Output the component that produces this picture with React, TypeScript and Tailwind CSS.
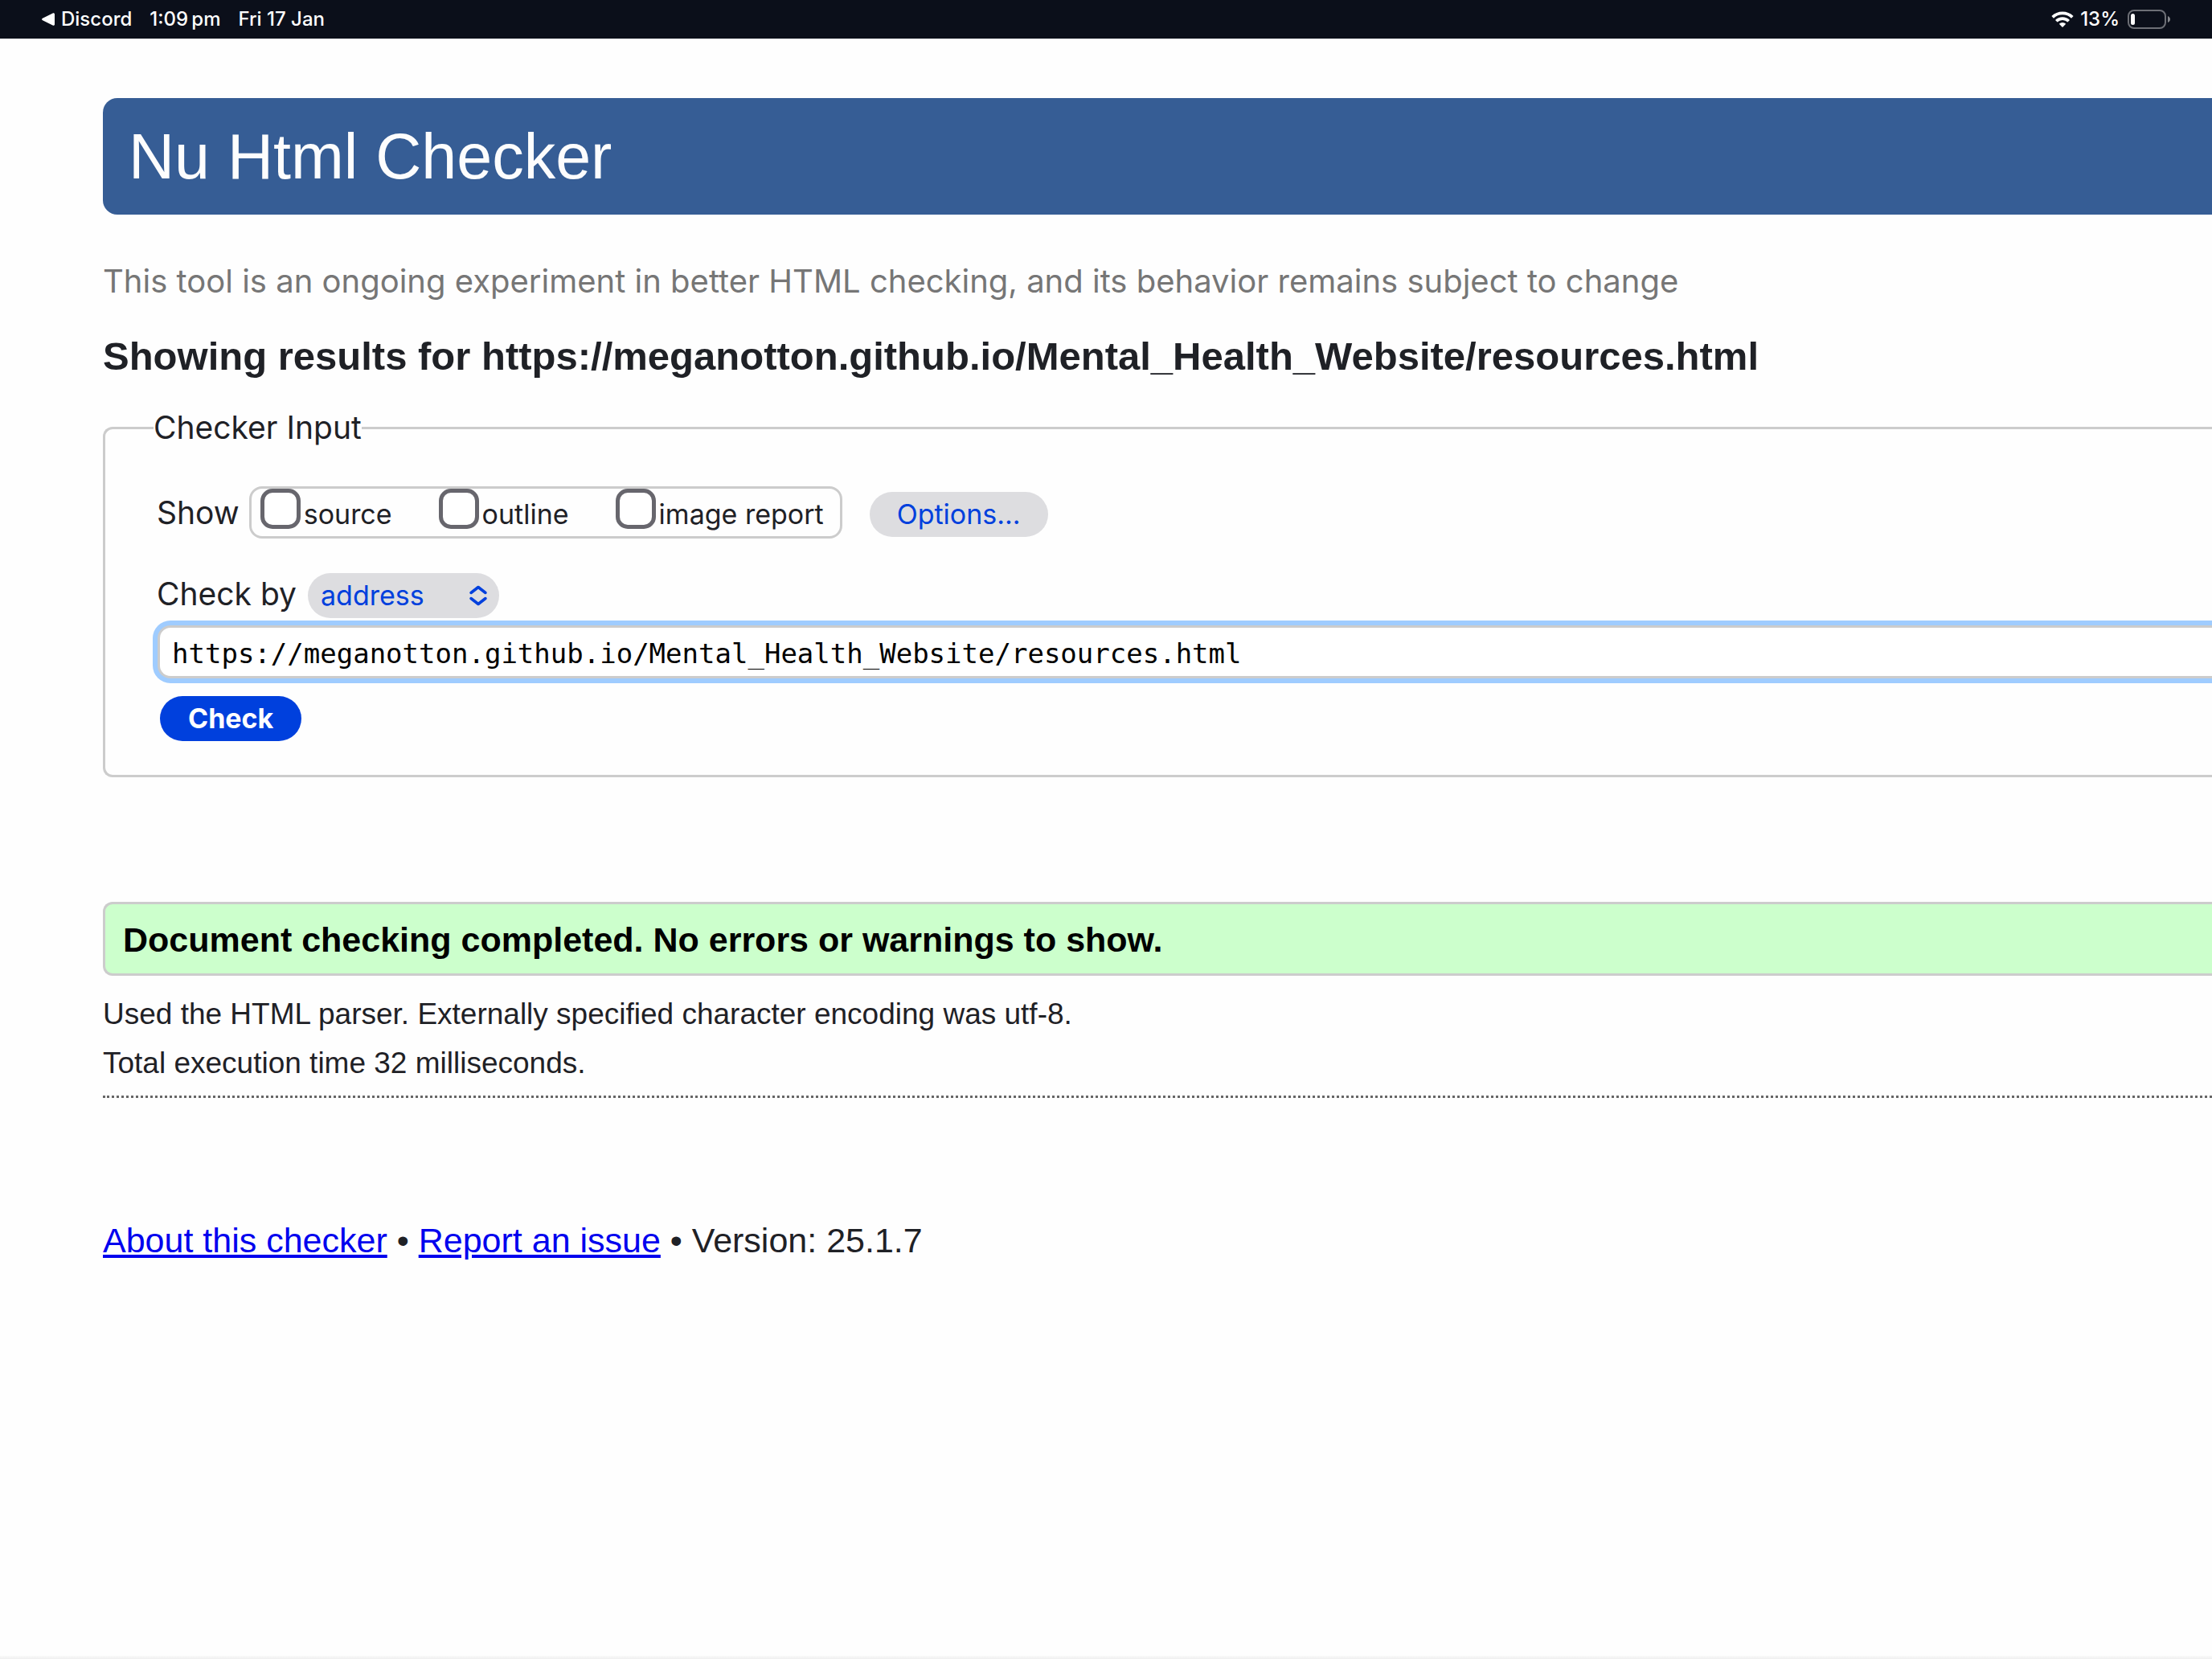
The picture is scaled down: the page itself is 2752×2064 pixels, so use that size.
const PAGE_URL = "https://meganotton.github.io/Mental_Health_Website/resources.html";

function StatusBar() {
  return (
    <div className="flex h-12 items-center justify-between bg-[#0b0f1a] pl-[52px] pr-[51px] pb-px font-['Inter',sans-serif] text-2xl font-medium leading-8 text-white">
      <div className="flex items-center gap-[22px]">
        <button type="button" className="flex items-center gap-2">
          <svg className="h-4 w-4" viewBox="0 0 16 16" fill="currentColor" aria-hidden="true">
            <path d="M13.6.5C14.8-.1 16 .5 16 1.800v12.400c0 1.300-1.200 1.900-2.400 1.300L1 9.200C-.2 8.500-.2 7.500 1 6.800z" />
          </svg>
          Discord
        </button>
        <span>1:09&#8201;pm</span>
        <span>Fri 17 Jan</span>
      </div>
      <div className="flex items-center gap-2">
        <svg className="h-5 w-7" viewBox="0 0 28 20" fill="none" stroke="currentColor" strokeWidth="3.700" aria-label="Wi-Fi">
          <path d="M1.700 7.400a17.600 17.600 0 0 1 24.600 0" />
          <path d="M6.300 12.200a11 11 0 0 1 15.400 0" />
          <path d="M9.800 15.800a6 6 0 0 1 8.400 0L14 20z" fill="currentColor" stroke="none" />
        </svg>
        <span>13%</span>
        <svg className="ml-0.5 h-6 w-[54px]" viewBox="0 0 54 24" aria-label="Battery">
          <rect x="1" y="1" width="46" height="22" rx="7" fill="none" stroke="#6d6f76" strokeWidth="2" />
          <rect x="4" y="5" width="5" height="14" rx="2.500" fill="#fff" />
          <path d="M50 8c4 1.500 4 6.500 0 8z" fill="#85878c" />
        </svg>
      </div>
    </div>
  );
}

function ShowOption({ id, label }: { id: string; label: string }) {
  return (
    <div className="flex items-baseline gap-1">
      <input
        id={id}
        type="checkbox"
        className="h-[50px] w-[50px] shrink-0 appearance-none self-start rounded-[15px] border-[5px] border-[#67666d] bg-white"
      />
      <label htmlFor={id} className="text-[34px] leading-[64px]">
        {label}
      </label>
    </div>
  );
}

export default function App() {
  return (
    <div className="flex min-h-screen flex-col overflow-hidden bg-[#fefefe] font-['Liberation_Sans',sans-serif] text-[#1f2126]">
      <StatusBar />
      <main className="grow pl-32 pt-[74px]">
        <h1 className="rounded-l-[18px] bg-[#365d95] pl-8 text-[79px] leading-[145px] text-[#fdfdfd]">Nu Html Checker</h1>
        <p className="mt-[59px] font-['Inter',sans-serif] text-[40px] leading-[48px] text-[#767676]">
          This tool is an ongoing experiment in better HTML checking, and its behavior remains subject to change
        </p>
        <h2 className="mt-[41px] text-[49px] font-bold leading-[56px]">Showing results for {PAGE_URL}</h2>

        <form className="mt-9 font-['Inter',sans-serif]" onSubmit={(e) => e.preventDefault()}>
          <fieldset className="rounded-l-xl border-[3px] border-r-0 border-[#ccc] pb-[42px] pl-16 pt-12">
            <legend className="-ml-1 text-[39px] leading-[50px]">Checker Input</legend>
            <div className="flex items-baseline">
              <span className="text-[39px] leading-[48px]">Show</span>
              <div className="ml-3 flex h-[65px] gap-[58px] rounded-2xl border-[3px] border-[#ccc] pl-[11px] pr-5">
                <ShowOption id="show-source" label="source" />
                <ShowOption id="show-outline" label="outline" />
                <ShowOption id="show-image-report" label="image report" />
              </div>
              <button type="button" className="ml-[34px] h-14 rounded-full bg-[#dddde0] px-[34px] text-[34px] leading-[56px] text-[#0040dd]">
                Options...
              </button>
            </div>

            <div className="mt-[43px] flex items-baseline">
              <label htmlFor="check-by" className="text-[39px] leading-[48px]">
                Check by
              </label>
              <div className="relative ml-3.5">
                <select
                  id="check-by"
                  className="h-14 w-[238px] appearance-none rounded-full bg-[#dddde0] pl-4 text-[34px] leading-[56px] text-[#0040dd]"
                >
                  <option>address</option>
                  <option>file upload</option>
                  <option>text input</option>
                </select>
                <svg
                  className="pointer-events-none absolute right-3.5 top-3.5 h-7 w-6"
                  viewBox="0 0 24 28"
                  fill="none"
                  stroke="#0040dd"
                  strokeWidth="3.500"
                  strokeLinecap="round"
                  strokeLinejoin="round"
                  aria-hidden="true"
                >
                  <path d="M3 10.500 12 3.500l9 7M3 17.500l9 7 9-7" />
                </svg>
              </div>
            </div>

            <div className="mt-[9px] flex pl-px">
              <input
                type="text"
                aria-label="Address"
                defaultValue={PAGE_URL}
                className="h-[66px] min-w-0 grow rounded-l-2xl border-[3px] border-r-0 border-[#ccc] bg-white pl-[15px] pt-1 font-['DejaVu_Sans_Mono',monospace] text-[34px] text-black shadow-[0_0_0_6px_#9fccff] outline-none"
              />
            </div>
            <button type="submit" className="ml-1 mt-[22px] block h-14 rounded-full bg-[#0040dd] px-[35px] text-[34px] font-bold leading-[56px] text-white">
              Check
            </button>
          </fieldset>
        </form>

        <p className="mt-[155px] rounded-l-xl border-[3px] border-r-0 border-[#ccc] bg-[#ccffcc] pl-[22px] pt-0.5 text-[43px] font-bold leading-[84px] text-black">
          Document checking completed. No errors or warnings to show.
        </p>
        <div className="mt-[17px] border-b-[3px] border-dotted border-[#666] pb-2.5 text-[37px] leading-[61px]">
          <p>Used the HTML parser. Externally specified character encoding was utf-8.</p>
          <p>Total execution time 32 milliseconds.</p>
        </div>
        <p className="mt-[147px] text-[43px] leading-[60px]">
          <a href="#about" className="text-[#0000ee] underline">About this checker</a>
          {" • "}
          <a href="#report" className="text-[#0000ee] underline">Report an issue</a>
          {" • Version: 25.1.7"}
        </p>
      </main>
      <div className="h-1 bg-linear-to-b from-[#fafafa] to-[#f0f0f0]" />
    </div>
  );
}
